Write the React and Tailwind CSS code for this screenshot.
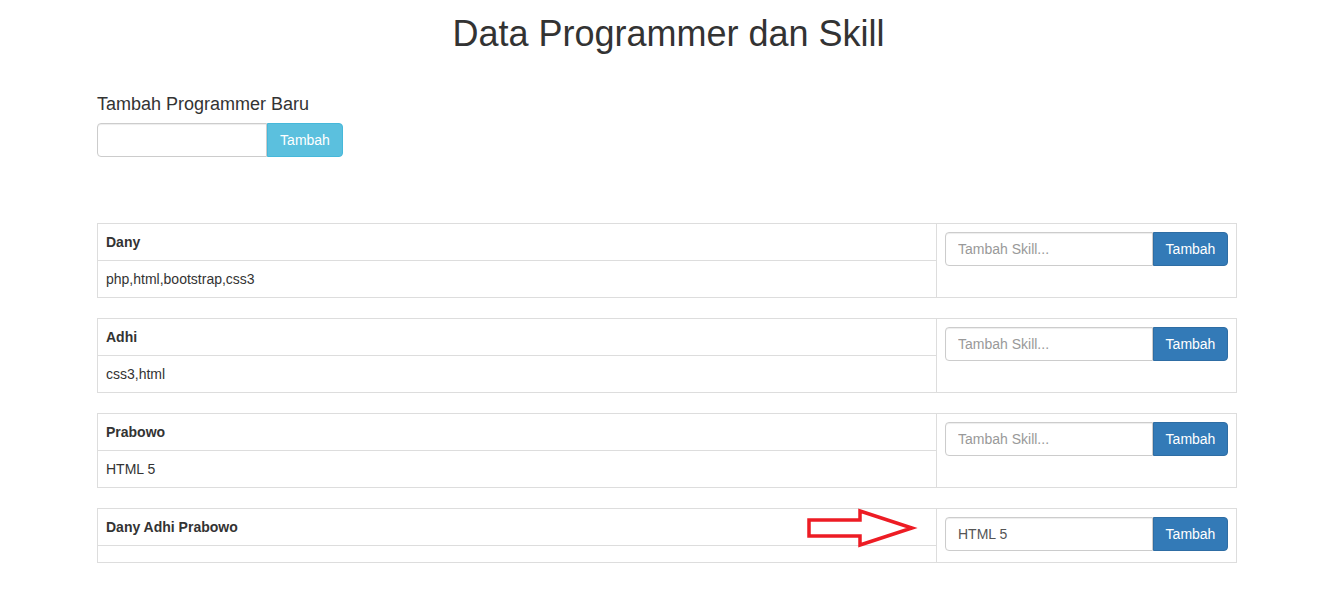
import React from "react";

const rows = [
  { name: "Dany", skills: "php,html,bootstrap,css3", value: "" },
  { name: "Adhi", skills: "css3,html", value: "" },
  { name: "Prabowo", skills: "HTML 5", value: "" },
  { name: "Dany Adhi Prabowo", skills: "", value: "HTML 5" },
];

function Row({ name, skills, value }) {
  return (
    <div className="flex border border-[#ddd] mb-[20px]">
      <div className="w-[839px] border-r border-[#ddd] flex flex-col">
        <div className="px-[8px] py-[8px] leading-[20px] font-bold border-b border-[#ddd]">{name}</div>
        <div className={skills ? "px-[8px] py-[8px] leading-[20px]" : "h-[16px]"}>{skills}</div>
      </div>
      <div className="flex-1 p-[8px]">
        <div className="flex h-[34px]">
          <input
            className="w-[208px] h-[34px] border border-[#ccc] rounded-l-[4px] px-[12px] text-[14px] text-[#555] placeholder:text-[#999] outline-none shadow-[inset_0_1px_1px_rgba(0,0,0,0.075)]"
            placeholder="Tambah Skill..."
            defaultValue={value}
          />
          <button className="w-[75px] h-[34px] bg-[#337ab7] border border-[#2e6da4] rounded-r-[4px] text-white text-[14px]">
            Tambah
          </button>
        </div>
      </div>
    </div>
  );
}

export default function App() {
  return (
    <div
      className="relative w-[1337px] min-h-[601px] bg-white text-[#333] text-[14px]"
      style={{ fontFamily: '"Liberation Sans", Arial, sans-serif' }}
    >
      <h1 className="pt-[14px] text-center text-[36px] leading-[40px] font-normal">Data Programmer dan Skill</h1>
      <div className="pl-[97px]">
        <div className="mt-[40px] text-[18px] leading-[20px]">Tambah Programmer Baru</div>
        <div className="mt-[9px] flex h-[34px]">
          <input className="w-[170px] h-[34px] border border-[#ccc] rounded-l-[4px] px-[12px] outline-none shadow-[inset_0_1px_1px_rgba(0,0,0,0.075)]" />
          <button className="w-[76px] h-[34px] bg-[#5bc0de] border border-[#46b8da] rounded-r-[4px] text-white text-[14px]">
            Tambah
          </button>
        </div>
        <div className="mt-[66px] w-[1140px]">
          {rows.map((r) => (
            <Row key={r.name} {...r} />
          ))}
        </div>
      </div>
      <svg
        className="absolute left-[804px] top-[507px] pointer-events-none overflow-visible"
        width="114"
        height="44"
        viewBox="0 0 114 44"
      >
        <polygon
          points="5,13 56,13 56,4 108,21 56,38 56,29 5,29"
          fill="none"
          stroke="#ed1c24"
          strokeWidth="3.5"
        />
      </svg>
    </div>
  );
}
